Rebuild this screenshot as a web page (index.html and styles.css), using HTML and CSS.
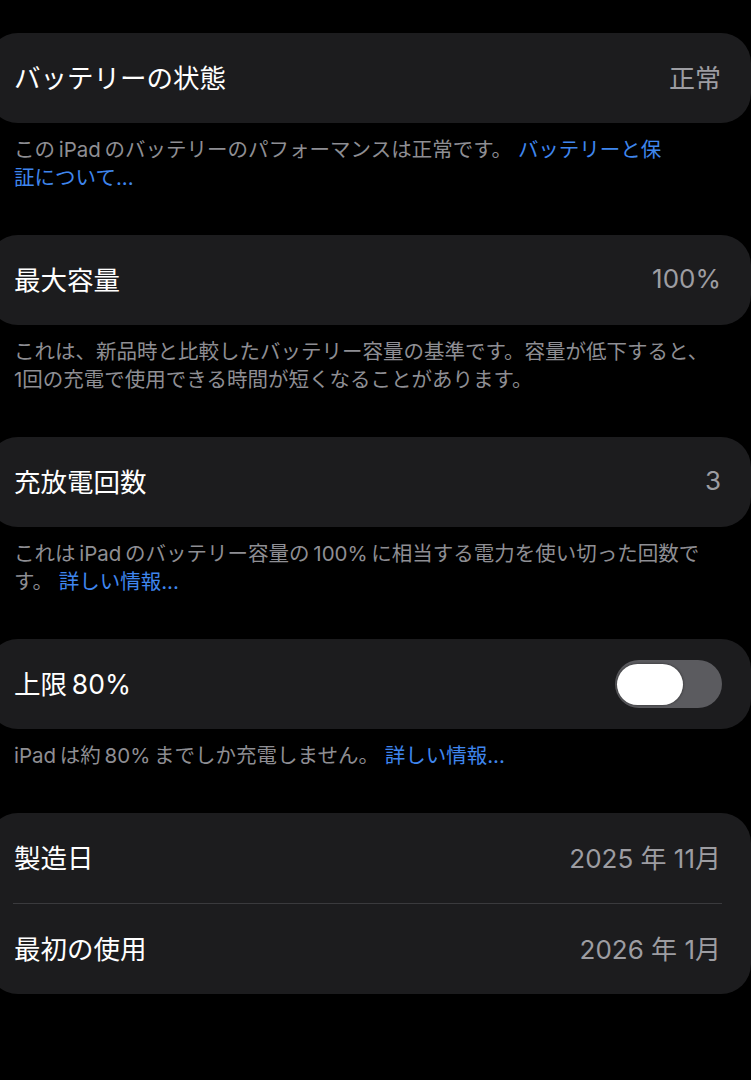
FILE: index.html
```html
<!DOCTYPE html>
<html lang="ja">
<head>
<meta charset="utf-8">
<title>バッテリー</title>
<link rel="stylesheet" href="styles.css">
</head>
<body>
<main class="page">
  <section class="group">
    <div class="card">
      <div class="row">
        <span class="label">バッテリーの状態</span>
        <span class="value">正常</span>
      </div>
    </div>
    <p class="note">この&thinsp;iPad&thinsp;のバッテリーのパフォーマンスは正常です。 <span class="link">バッテリーと保<br>証について...</span></p>
  </section>

  <section class="group">
    <div class="card">
      <div class="row">
        <span class="label">最大容量</span>
        <span class="value">100%</span>
      </div>
    </div>
    <p class="note">これは、新品時と比較したバッテリー容量の基準です。容量が低下すると、<br>1回の充電で使用できる時間が短くなることがあります。</p>
  </section>

  <section class="group">
    <div class="card">
      <div class="row">
        <span class="label">充放電回数</span>
        <span class="value">3</span>
      </div>
    </div>
    <p class="note">これは&thinsp;iPad&thinsp;のバッテリー容量の&thinsp;100%&thinsp;に相当する電力を使い切った回数で<br>す。 <span class="link">詳しい情報...</span></p>
  </section>

  <section class="group">
    <div class="card">
      <div class="row">
        <span class="label">上限&thinsp;80%</span>
        <span class="toggle"><span class="knob"></span></span>
      </div>
    </div>
    <p class="note">iPad&thinsp;は約&thinsp;80%&thinsp;までしか充電しません。 <span class="link">詳しい情報...</span></p>
  </section>

  <section class="group">
    <div class="card">
      <div class="row">
        <span class="label">製造日</span>
        <span class="value">2025 年 11月</span>
      </div>
      <div class="sep"></div>
      <div class="row">
        <span class="label">最初の使用</span>
        <span class="value">2026 年 1月</span>
      </div>
    </div>
  </section>
</main>
</body>
</html>
```

FILE: styles.css
```css
html, body {
  margin: 0;
  padding: 0;
  background: #000;
  overflow-x: hidden;
}

body {
  font-family: Inter, "Noto Sans CJK JP", sans-serif;
  color: #fff;
}

.page {
  padding-top: 33px;
}

.group {
  margin-bottom: 43px;
}

.card {
  background: #1c1c1e;
  border-radius: 30px;
  margin-left: -12px;
  width: calc(100% + 12px);
}

.row {
  height: 90px;
  display: flex;
  align-items: center;
  justify-content: space-between;
  padding: 0 30px 4px 26px;
  box-sizing: border-box;
}

.label {
  font-size: 26.5px;
}

.value {
  font-size: 26px;
  color: #9d9da2;
}

.sep {
  height: 1px;
  background: #3a3a3d;
  margin: 0 29px 0 25px;
}

.note {
  margin: 0;
  padding: 13px 10px 0 14px;
  font-size: 20.5px;
  line-height: 28px;
  color: #8e8e93;
  white-space: nowrap;
}

.link {
  color: #3f86ee;
}

.toggle {
  width: 107px;
  height: 48px;
  border-radius: 24px;
  background: #5b5b5f;
  display: flex;
  align-items: center;
  padding: 0 2px;
  box-sizing: border-box;
  margin-right: -1px;
  margin-top: 4px;
}

.knob {
  width: 66px;
  height: 41px;
  border-radius: 21px;
  background: #fff;
  box-shadow: 0 0 2px 1px rgba(0, 0, 0, 0.25);
}
```
